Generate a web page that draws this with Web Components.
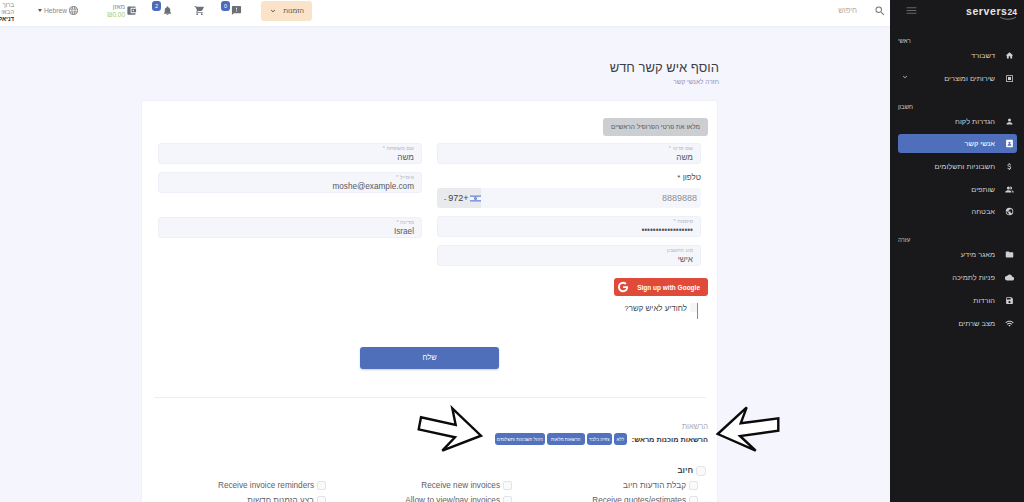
<!DOCTYPE html>
<html lang="he">
<head>
<meta charset="utf-8">
<title>הוסף איש קשר חדש</title>
<style>
  html, body { margin: 0; height: 502px; overflow: hidden; background: #f5f6fd; font-family: "Liberation Sans", "DejaVu Sans", sans-serif; }
</style>
</head>
<body>
<app-shell>
  <top-bar slot="top"></top-bar>
  <contact-form slot="main"></contact-form>
  <side-nav slot="side"></side-nav>
</app-shell>

<script>
const ICONS = {
  home: '<path d="M10 20v-6h4v6h5v-8h3L12 3 2 12h3v8z"/>',
  box: '<path d="M3 3h18v18H3zM5 5v14h14V5z" fill-rule="evenodd"/><path d="M8 8h8v8H8z"/>',
  dollar: '<path d="M11.800 10.900c-2.270-.590-3-1.200-3-2.150 0-1.090 1.010-1.850 2.700-1.850 1.780 0 2.440.850 2.500 2.100h2.210c-.070-1.720-1.120-3.300-3.210-3.810V3h-3v2.160c-1.940.420-3.500 1.680-3.500 3.610 0 2.310 1.910 3.460 4.700 4.130 2.500.600 3 1.480 3 2.410 0 .690-.490 1.790-2.700 1.790-2.060 0-2.870-.920-2.980-2.100h-2.200c.120 2.190 1.760 3.420 3.680 3.830V21h3v-2.150c1.950-.370 3.500-1.500 3.500-3.550 0-2.840-2.430-3.810-4.700-4.400z"/>',
  person: '<path d="M12 12a4 4 0 1 0 0-8 4 4 0 0 0 0 8zm0 2c-3 0-8 1.500-8 4.500V20h16v-1.500c0-3-5-4.500-8-4.500z"/>',
  contact: '<path fill-rule="evenodd" d="M5 2h14a2 2 0 0 1 2 2v16a2 2 0 0 1-2 2H5a2 2 0 0 1-2-2V4a2 2 0 0 1 2-2zm7 5a3 3 0 1 0 0 6 3 3 0 0 0 0-6zm-5 11h10v-1.500c0-2-3.300-3-5-3s-5 1-5 3z"/>',
  group: '<path d="M9 12a4 4 0 1 0 0-8 4 4 0 0 0 0 8zm0 2c-3 0-8 1.500-8 4v2h16v-2c0-2.500-5-4-8-4zm6-2a4 4 0 0 0 0-8c-.5 0-1 .1-1.400.3a6 6 0 0 1 0 7.400c.4.200.9.300 1.400.300zm2 2.300c1.500.900 2.500 2.200 2.500 3.700v2H23v-2c0-2-3-3.300-6-3.700z"/>',
  globe: '<path d="M12 2a10 10 0 1 0 0 20 10 10 0 0 0 0-20zm-1 17.900A8 8 0 0 1 4.200 10L9 15v1c0 1.100.9 2 2 2zm6.900-2.500A2 2 0 0 0 16 16h-1v-3a1 1 0 0 0-1-1H8v-2h2a1 1 0 0 0 1-1V7h2a2 2 0 0 0 2-2v-.4a8 8 0 0 1 2.900 12.800z"/>',
  folder: '<path d="M10 4H4a2 2 0 0 0-2 2v12a2 2 0 0 0 2 2h16a2 2 0 0 0 2-2V8a2 2 0 0 0-2-2h-8z"/>',
  cloud: '<path d="M19.400 10A7.500 7.500 0 0 0 5.400 8 6 6 0 0 0 6 20h13a5 5 0 0 0 .4-10z"/>',
  save: '<path d="M17 3H5a2 2 0 0 0-2 2v14a2 2 0 0 0 2 2h14a2 2 0 0 0 2-2V7zm-5 16a3 3 0 1 1 0-6 3 3 0 0 1 0 6zm3-10H5V5h10z"/>',
  wifi: '<path d="M1 9l2 2c5-5 13-5 18 0l2-2C17 3 7 3 1 9zm8 8l3 3 3-3c-1.700-1.700-4.300-1.700-6 0zm-4-4l2 2c2.800-2.800 7.200-2.800 10 0l2-2c-3.900-3.900-10.100-3.900-14 0z"/>',
  search: '<path d="M15.500 14h-.790l-.280-.270A6.470 6.470 0 0 0 16 9.500 6.500 6.500 0 1 0 9.500 16c1.610 0 3.090-.590 4.230-1.570l.270.280v.790l5 4.990L20.490 19l-4.990-5zm-6 0C7.010 14 5 11.990 5 9.500S7.010 5 9.500 5 14 7.010 14 9.500 11.990 14 9.500 14z"/>',
  menu: '<path d="M3 18h18v-2H3zm0-5h18v-2H3zm0-7v2h18V6z"/>',
  chat: '<path d="M20 2H4a2 2 0 0 0-2 2v18l4-4h14a2 2 0 0 0 2-2V4a2 2 0 0 0-2-2zm-7 12h-2v-2h2zm0-4h-2V6h2z"/>',
  cart: '<path d="M7 18a2 2 0 1 0 0 4 2 2 0 0 0 0-4zM1 2v2h2l3.600 7.600L5.200 14c-.7 1.300.3 3 1.800 3h12v-2H7.400l1.100-2h7.500c.7 0 1.400-.4 1.700-1L21.300 5.500A1 1 0 0 0 20.400 4H5.200L4.300 2zm16 16a2 2 0 1 0 0 4 2 2 0 0 0 0-4z"/>',
  bell: '<path d="M12 22a2 2 0 0 0 2-2h-4a2 2 0 0 0 2 2zm6-6v-5c0-3.100-1.600-5.600-4.500-6.300V4a1.500 1.500 0 0 0-3 0v.7C7.600 5.400 6 7.900 6 11v5l-2 2v1h16v-1z"/>',
  wallet: '<path d="M21 18v1a2 2 0 0 1-2 2H5a2 2 0 0 1-2-2V5a2 2 0 0 1 2-2h14a2 2 0 0 1 2 2v1h-9a2 2 0 0 0-2 2v8a2 2 0 0 0 2 2zm-9-2h10V8H12zm4-2.500a1.500 1.500 0 1 1 0-3 1.500 1.500 0 0 1 0 3z"/>',
  world: '<path d="M12 2a10 10 0 1 0 0 20 10 10 0 0 0 0-20zm6.900 6H16a16 16 0 0 0-1.400-3.600A8 8 0 0 1 18.900 8zM12 4c.8 1.200 1.500 2.500 1.900 4h-3.800c.4-1.500 1.100-2.800 1.900-4zM4.300 14a8 8 0 0 1 0-4h3.400a17 17 0 0 0 0 4zm.8 2H8c.3 1.300.8 2.500 1.400 3.600A8 8 0 0 1 5.100 16zM8 8H5.100a8 8 0 0 1 4.300-3.600C8.800 5.500 8.300 6.700 8 8zm4 12c-.8-1.200-1.500-2.500-1.900-4h3.800c-.4 1.500-1.100 2.800-1.900 4zm2.300-6H9.700a15 15 0 0 1 0-4h4.600a15 15 0 0 1 0 4zm.3 5.600c.6-1.100 1.100-2.300 1.400-3.600h2.900a8 8 0 0 1-4.300 3.600zm1.700-5.600a17 17 0 0 0 0-4h3.400a8 8 0 0 1 0 4z"/>',
  chevron: '<path d="M7.400 8.600L12 13.200l4.600-4.600L18 10l-6 6-6-6z"/>'
};
const icon = (name, size) => `<svg width="${size}" height="${size}" viewBox="0 0 24 24" fill="currentColor" aria-hidden="true" style="flex:none">${ICONS[name]}</svg>`;

class AppShell extends HTMLElement {
  constructor() {
    super();
    this.attachShadow({ mode: 'open' }).innerHTML = `
      <style>
        :host { display: flex; width: 1024px; height: 502px; overflow: hidden; }
        .main { width: 890px; display: flex; flex-direction: column; min-width: 0; }
        .content { flex: 1; overflow: hidden; min-height: 0; }
        .side { width: 134px; }
      </style>
      <div class="main">
        <slot name="top"></slot>
        <div class="content"><slot name="main"></slot></div>
      </div>
      <div class="side"><slot name="side"></slot></div>`;
  }
}

class TopBar extends HTMLElement {
  constructor() {
    super();
    this.attachShadow({ mode: 'open' }).innerHTML = `
      <style>
        :host { display: flex; height: 26px; box-sizing: border-box; padding-bottom: 5px; background: #fff; box-shadow: 0 1px 3px rgba(90,100,140,.06); color: #6b6f76; font-size: 7px; align-items: center; position: relative; }
        .user { width: 14px; flex: none; direction: rtl; text-align: right; line-height: 7px; color: #888; white-space: nowrap; font-size: 6px; margin-top: 3px; }
        .user b { color: #222; }
        .lang { margin-left: 24px; display: flex; align-items: center; color: #888; font-size: 6.700px; }
        .caret { width: 0; height: 0; border: 2.500px solid transparent; border-top: 3px solid #555; border-bottom: 0; margin-right: 2px; }
        .lang svg { margin-left: 1px; }
        .wallet { margin-left: 26px; display: flex; align-items: center; gap: 1px; }
        .wallet .amt { width: 20px; text-align: right; line-height: 8px; font-size: 6.500px; color: #888; direction: rtl; }
        .wallet .amt span { color: #9ecb6f; display: block; direction: ltr; }
        .btn { position: relative; display: flex; }
        .badge { position: absolute; top: -4px; left: -10px; width: 9px; height: 10px; border-radius: 3px; background: #4c6bbd; color: #fff; font-size: 5.500px; line-height: 10px; text-align: center; }
        .bell { margin-left: 25px; }
        .cart { margin-left: 21px; }
        .chat { margin-left: 26px; }
        .orders { margin-left: 19px; width: 51px; height: 20px; box-sizing: border-box; background: #fbe3c9; border-radius: 3px; display: flex; align-items: center; justify-content: center; gap: 6px; color: #555; font-size: 7px; }
        .orders svg { color: #333; }
        .spacer { flex: 1; }
        .search { color: #aaa; font-size: 7.500px; }
        .sicon { margin: 0 4px 0 17px; color: #777; display: flex; }
      </style>
      <div class="user">ברוך<br>הבא!<br><b>דניאל</b></div>
      <div class="lang"><span class="caret"></span><span>Hebrew</span>${icon('world', 11)}</div>
      <div class="wallet"><div class="amt">מאזן<span>₪0.00</span></div>${icon('wallet', 11)}</div>
      <div class="btn bell">${icon('bell', 11)}<span class="badge">2</span></div>
      <div class="btn cart">${icon('cart', 11)}</div>
      <div class="btn chat">${icon('chat', 11)}<span class="badge">0</span></div>
      <div class="orders">${icon('chevron', 8)}<span>הזמנות</span></div>
      <div class="spacer"></div>
      <span class="search">חיפוש</span>
      <span class="sicon">${icon('search', 12)}</span>`;
  }
}

class SideItem extends HTMLElement {
  constructor() {
    super();
    const ic = this.getAttribute('icon');
    this.attachShadow({ mode: 'open' }).innerHTML = `
      <style>
        :host { display: flex; direction: rtl; align-items: center; height: 19px; margin-bottom: 3.700px; padding: 0 2px 0 0; border-radius: 3px; color: #cfcfd1; font-size: 7.400px; white-space: nowrap; }
        :host([active]) { background: #4f6fba; color: #fff; }
        .i { width: 11px; display: flex; justify-content: center; margin-left: 9px; }
        .more { margin-right: auto; margin-left: 3px; display: flex; margin-top: -3px; }
      </style>
      <span class="i">${icon(ic, 9)}</span><slot></slot>
      ${this.hasAttribute('more') ? `<span class="more">${icon('chevron', 8)}</span>` : ''}`;
  }
}

class SideNav extends HTMLElement {
  constructor() {
    super();
    this.attachShadow({ mode: 'open' }).innerHTML = `
      <style>
        :host { display: block; height: 502px; background: #19191b; color: #ddd; box-sizing: border-box; padding: 0 7px 0 8px; direction: rtl; }
        .head { display: flex; justify-content: space-between; align-items: center; height: 21px; direction: ltr; color: #666; padding: 0 0 0 7px; }
        .logo { color: #e6e6e6; font-size: 10.500px; font-weight: 700; letter-spacing: .6px; white-space: nowrap; position: relative; }
        .logo small { font-size: 8.500px; letter-spacing: 0; }
        .logo svg { position: absolute; right: 0; bottom: -3px; }
        h4 { margin: 15px 0 0; font-weight: 400; font-size: 6px; color: #cfcfd1; text-align: left; direction: rtl; height: 9px; line-height: 9px; }
        h4.first { margin-top: 16px; }
      </style>
      <div class="head">${icon('menu', 13)}<span class="logo">servers<small>24</small><svg width="18" height="4" viewBox="0 0 18 4" fill="none" stroke="#bbb" stroke-width=".6"><path d="M1 1c4 3 12 3 16 0"/></svg></span></div>
      <h4 class="first">ראשי</h4>
      <side-item icon="home">דשבורד</side-item>
      <side-item icon="box" more>שירותים ומוצרים</side-item>
      <h4>חשבון</h4>
      <side-item icon="person">הגדרות לקוח</side-item>
      <side-item icon="contact" active>אנשי קשר</side-item>
      <side-item icon="dollar">חשבוניות ותשלומים</side-item>
      <side-item icon="group">שותפים</side-item>
      <side-item icon="globe">אבטחה</side-item>
      <h4>עזרה</h4>
      <side-item icon="folder">מאגר מידע</side-item>
      <side-item icon="cloud">פניות לתמיכה</side-item>
      <side-item icon="save">הורדות</side-item>
      <side-item icon="wifi">מצב שרתים</side-item>`;
  }
}

class FormField extends HTMLElement {
  constructor() {
    super();
    const dir = this.getAttribute('value-dir') || 'rtl';
    this.attachShadow({ mode: 'open' }).innerHTML = `
      <style>
        :host { display: block; box-sizing: border-box; width: 264px; height: 21px; background: #f5f6fc; border: 1px solid #eef0f8; border-radius: 3px; padding: 1px 7px 0; direction: rtl; }
        .l { font-size: 5.500px; color: #b4b6be; line-height: 7px; height: 7px; }
        .v { font-size: 8.200px; color: #55585e; line-height: 11px; direction: ${dir}; text-align: right; }
      </style>
      <div class="l">${this.getAttribute('label')}</div>
      <div class="v"><slot></slot></div>`;
  }
}

class PhoneField extends HTMLElement {
  constructor() {
    super();
    this.attachShadow({ mode: 'open' }).innerHTML = `
      <style>
        :host { display: flex; direction: ltr; box-sizing: border-box; width: 264px; height: 20px; background: #f5f6fc; border-radius: 3px; overflow: hidden; align-items: center; justify-content: space-between; font-size: 9px; color: #8b8d92; }
        .code { background: #e9eaee; height: 100%; width: 44px; display: flex; align-items: center; padding-left: 7px; box-sizing: border-box; color: #444; white-space: nowrap; }
        .num { padding-right: 4px; }
        svg { margin-left: 1px; flex: none; }
      </style>
      <span class="code"><span style="font-size:7px;margin-right:2px">-</span>972+<svg width="11" height="7" viewBox="0 0 11 7"><rect width="11" height="7" fill="#f4f5fb"/><rect y=".6" width="11" height="1" fill="#3f5fc4"/><rect y="5.400" width="11" height="1" fill="#3f5fc4"/><path d="M5.500 2l1.300 2.200H4.200zM5.500 5L4.200 2.800h2.600z" fill="none" stroke="#3f5fc4" stroke-width=".5"/></svg></span>
      <span class="num">8889888</span>`;
  }
}

class CheckItem extends HTMLElement {
  constructor() {
    super();
    this.attachShadow({ mode: 'open' }).innerHTML = `
      <style>
        :host { display: flex; align-items: center; direction: rtl; gap: 3px; font-size: 8.200px; color: #5e6066; white-space: nowrap; height: 15px; }
        .b { width: 9px; height: 9px; box-sizing: border-box; background: #fafafb; border: 1px solid #e3e4e9; border-radius: 2px; flex: none; }
      </style>
      <span class="b"></span><slot></slot>`;
  }
}

class PermChip extends HTMLElement {
  constructor() {
    super();
    this.attachShadow({ mode: 'open' }).innerHTML = `
      <style>
        :host { display: inline-flex; align-items: center; justify-content: center; box-sizing: border-box; height: 12px; width: var(--w); background: #5272bd; color: #fff; font-size: 4.500px; border-radius: 3px; white-space: nowrap; }
      </style><slot></slot>`;
  }
}

class PointerArrows extends HTMLElement {
  constructor() {
    super();
    // free-hand arrows drawn over the screenshot
    this.attachShadow({ mode: 'open' }).innerHTML = `
      <style>
        :host { display: block; position: absolute; left: 0; top: 0; width: 1024px; height: 502px; pointer-events: none; }
        svg { display: block; }
      </style>
      <svg width="1024" height="502" fill="#fff" stroke="#0b0b0b" stroke-width="2.400" stroke-linejoin="miter">
        <path d="M452.300 408.300 481 435.700 442.300 450.700 455 437.300 418.700 429.300 421 417.300 455.700 425z"/>
        <path d="M746.700 407.300 717.700 434 755.700 450.700 740 436 778.300 430.700 778.300 418.300 740.700 423.300z"/>
      </svg>`;
  }
}

class ContactForm extends HTMLElement {
  constructor() {
    super();
    this.attachShadow({ mode: 'open' }).innerHTML = `
      <style>
        :host { display: block; direction: rtl; height: 476px; padding: 0 172px 0 141px; box-sizing: border-box; width: 890px; }
        .title { padding: 33px 0 0 0; margin-right: -1px; }
        h1 { margin: 0; font-size: 13px; line-height: 18px; font-weight: 400; color: #3d3f45; }
        .crumb { font-size: 6.500px; color: #8d90b8; line-height: 8px; margin-top: 1px; }
        .card { margin-top: 14px; width: 577px; box-sizing: border-box; height: 420px; background: #fff; border: 1px solid #f0f1f7; border-radius: 4px; padding: 17px 9px 0 10px; }
        .fill { height: 18px; width: 105px; background: #ccced1; border-radius: 3px; font-size: 6.500px; line-height: 18px; text-align: center; color: #55585e; }
        .cols { display: flex; gap: 15px; padding: 7px 7px 0 0; }
        .col { display: flex; flex-direction: column; width: 264px; }
        .plabel { font-size: 8px; color: #44464c; height: 16px; line-height: 11px; margin-top: 8px; }
        .gap8 { margin-top: 8px; }
        .gap24 { margin-top: 24px; }
        .google { margin-top: 12px; width: 94px; height: 18px; background: #e04a39; border-radius: 3px; color: #fff; display: flex; align-items: center; justify-content: space-between; direction: ltr; font-size: 6.500px; font-weight: 700; padding: 0 8px 0 3px; box-sizing: border-box; }
        .notify { display: flex; align-items: flex-start; margin: 7px 10px 0 0; height: 16px; font-size: 7.900px; color: #45474c; gap: 3px; line-height: 11px; }
        .notify i { display: block; width: 8px; height: 16px; box-sizing: border-box; border-right: 1.500px solid #8b8b8e; background: linear-gradient(#f5f5f7 0 9px, transparent 9px); }
        .send { margin: 28px 209px 0 0; width: 139px; height: 22px; background: #4f6fba; color: #fff; border-radius: 3px; text-align: center; line-height: 22px; font-size: 7.500px; box-shadow: 0 1px 2px rgba(70,90,150,.3); }
        hr { border: 0; border-top: 1px solid #eeeff3; margin: 28px 2px 0 2px; }
        .perm-l { font-size: 7.500px; color: #a9abb2; margin-top: 24px; line-height: 10px; }
        .presets { display: flex; align-items: center; gap: 2px; margin-top: 1px; }
        .presets b { font-size: 7.300px; color: #33353a; margin-left: 3px; }
        .group { display: flex; align-items: center; gap: 3px; font-size: 8px; font-weight: 700; color: #44464c; margin-top: 20px; height: 11px; padding-right: 2px; }
        .group span { display: block; width: 10px; height: 10px; box-sizing: border-box; background: #fafafb; border: 1px solid #e3e4e9; border-radius: 3px; }
        .perms { display: grid; grid-template-columns: repeat(3, 186px); margin: 2px 10px 0 0; }
      </style>
      <div class="title">
        <h1>הוסף איש קשר חדש</h1>
        <div class="crumb">חזרה לאנשי קשר</div>
      </div>
      <div class="card">
        <div class="fill">מלאו את פרטי הפרופיל הראשיים</div>
        <div class="cols">
          <div class="col">
            <form-field label="שם פרטי *">משה</form-field>
            <div class="plabel">טלפון *</div>
            <phone-field></phone-field>
            <form-field class="gap8" label="סיסמה *" value-dir="ltr">••••••••••••••••••</form-field>
            <form-field class="gap8" label="סוג החשבון">אישי</form-field>
          </div>
          <div class="col">
            <form-field label="שם משפחה *">משה</form-field>
            <form-field class="gap8" label="אימייל *" value-dir="ltr">moshe@example.com</form-field>
            <form-field class="gap24" label="מדינה *" value-dir="ltr">Israel</form-field>
          </div>
        </div>
        <div class="google"><svg width="12" height="12" viewBox="0 0 24 24" fill="#fff"><path d="M12.200 10.300v3.700h6c-.5 2.700-2.800 4.300-6 4.300a6.300 6.300 0 0 1 0-12.600c1.600 0 3 .6 4.100 1.600l2.800-2.800A10.300 10.300 0 0 0 12.200 1.700a10.300 10.300 0 1 0 0 20.600c6 0 10-4.200 10-10.100 0-.7-.1-1.300-.2-1.900z"/></svg><span>Sign up with Google</span></div>
        <div class="notify"><i></i><span>לחודיע לאיש קשר?</span></div>
        <div class="send">שלח</div>
        <hr>
        <div class="perm-l">הרשאות</div>
        <div class="presets">
          <b>הרשאות מוכנות מראש:</b>
          <perm-chip style="--w:13px">ללא</perm-chip>
          <perm-chip style="--w:25px">צפיה בלבד</perm-chip>
          <perm-chip style="--w:38px">הרשאות מלאות</perm-chip>
          <perm-chip style="--w:50px">ניהול חשבונות ותשלומים</perm-chip>
        </div>
        <div class="group"><span></span>חיוב</div>
        <div class="perms">
          <check-item>קבלת הודעות חיוב</check-item>
          <check-item>Receive new invoices</check-item>
          <check-item>Receive invoice reminders</check-item>
          <check-item>Receive quotes/estimates</check-item>
          <check-item>Allow to view/pay invoices</check-item>
          <check-item>בצע הזמנות חדשות</check-item>
        </div>
      </div>
      <pointer-arrows></pointer-arrows>`;
  }
}

customElements.define('side-item', SideItem);
customElements.define('side-nav', SideNav);
customElements.define('top-bar', TopBar);
customElements.define('form-field', FormField);
customElements.define('phone-field', PhoneField);
customElements.define('check-item', CheckItem);
customElements.define('perm-chip', PermChip);
customElements.define('pointer-arrows', PointerArrows);
customElements.define('contact-form', ContactForm);
customElements.define('app-shell', AppShell);
</script>
</body>
</html>
